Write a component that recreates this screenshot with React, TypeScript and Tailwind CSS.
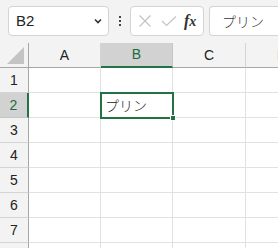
import React from "react";

const cols = ["A", "B", "C", "D"];
const rows = [1, 2, 3, 4, 5, 6, 7, 8];
const widths = ["w-[72px]", "w-[72px]", "w-[73px]", "w-[73px]"];

function Toolbar() {
  return (
    <div className="flex h-[43px] items-start bg-[#f3f3f3] pt-[6px]">
      <div className="ml-[8px] flex h-[30px] w-[101px] shrink-0 items-center justify-between rounded-[4px] border border-[#d4d4d4] bg-white pl-[7px] pr-[5px]">
        <span className="text-[15px] text-[#222]">B2</span>
        <svg width="10" height="10" viewBox="0 0 10 10">
          <path d="M2 3.5 L5 6.5 L8 3.5" fill="none" stroke="#333" strokeWidth="1.6" />
        </svg>
      </div>
      <div className="flex h-[30px] w-[21px] shrink-0 flex-col items-center justify-center gap-[2px]">
        <span className="h-[2px] w-[2px] bg-[#444]" />
        <span className="h-[2px] w-[2px] bg-[#444]" />
        <span className="h-[2px] w-[2px] bg-[#444]" />
      </div>
      <div className="flex h-[30px] w-[74px] shrink-0 items-center rounded-[4px] border border-[#d4d4d4] bg-white pl-[7px]">
        <svg width="14" height="14" viewBox="0 0 14 14">
          <path d="M1.5 1.5 L12.5 12.5 M12.5 1.5 L1.5 12.5" stroke="#c4c4c4" strokeWidth="1.2" />
        </svg>
        <svg className="ml-[9px]" width="16" height="12" viewBox="0 0 16 12">
          <path d="M1 6 L5.5 10.5 L15 1.5" fill="none" stroke="#c4c4c4" strokeWidth="1.2" />
        </svg>
        <span className="ml-[7px] font-['Liberation_Serif',serif] text-[16px] font-bold italic text-[#333]">
          f<span className="text-[14px]">x</span>
        </span>
      </div>
      <div className="ml-[5px] flex h-[30px] flex-1 items-center rounded-l-[4px] border border-r-0 border-[#d4d4d4] bg-white pl-[12px]">
        <span className="font-['Noto_Sans_CJK_JP',sans-serif] text-[14px] font-light text-[#333]">プリン</span>
      </div>
    </div>
  );
}

function HeaderRow() {
  return (
    <div className="flex h-[25px]">
      <div className="relative w-[29px] shrink-0 border-b border-r border-[#a6a6a6] bg-[#f3f3f3]">
        <svg className="absolute bottom-[3px] right-[4px]" width="17" height="17" viewBox="0 0 17 17">
          <path d="M17 0 L17 17 L0 17 Z" fill="#c4c4c4" />
        </svg>
      </div>
      {cols.map((c, i) => (
        <div
          key={c}
          className={`flex shrink-0 items-center justify-center ${widths[i]} ${
            c === "B"
              ? "border-b-2 border-r border-b-[#217346] border-r-[#c6c6c6] bg-[#d2d2d2] text-[#1e6b3f]"
              : "border-b border-r border-b-[#a6a6a6] border-r-[#d4d4d4] bg-[#f3f3f3] text-[#222]"
          } text-[14px]`}
        >
          {c}
        </div>
      ))}
    </div>
  );
}

export default function App() {
  return (
    <div className="h-[248px] w-[278px] overflow-hidden bg-white font-['Liberation_Sans','Noto_Sans_CJK_JP',sans-serif]">
      <Toolbar />
      <HeaderRow />
      {rows.map((r) => (
        <div key={r} className="flex h-[25px]">
          <div
            className={`flex w-[29px] shrink-0 items-center justify-center text-[14px] ${
              r === 2
                ? "border-b border-r-2 border-b-[#c6c6c6] border-r-[#217346] bg-[#d2d2d2] text-[#1e6b3f]"
                : "border-b border-r border-b-[#d4d4d4] border-r-[#a6a6a6] bg-[#f3f3f3] text-[#222]"
            }`}
          >
            {r < 8 ? r : ""}
          </div>
          {cols.map((c, i) => (
            <div key={c} className={`relative shrink-0 ${widths[i]} border-b border-r border-[#e1e1e1]`}>
              {r === 2 && c === "B" && (
                <div className="absolute -left-[1px] -top-[1px] z-10 flex h-[27px] w-[74px] items-center border-2 border-[#217346] pl-[3px]">
                  <span className="font-['Noto_Sans_CJK_JP',sans-serif] text-[14px] font-light text-[#222]">プリン</span>
                  <span className="absolute -bottom-[4px] -right-[4px] h-[6px] w-[6px] border border-white bg-[#217346]" />
                </div>
              )}
            </div>
          ))}
        </div>
      ))}
    </div>
  );
}
